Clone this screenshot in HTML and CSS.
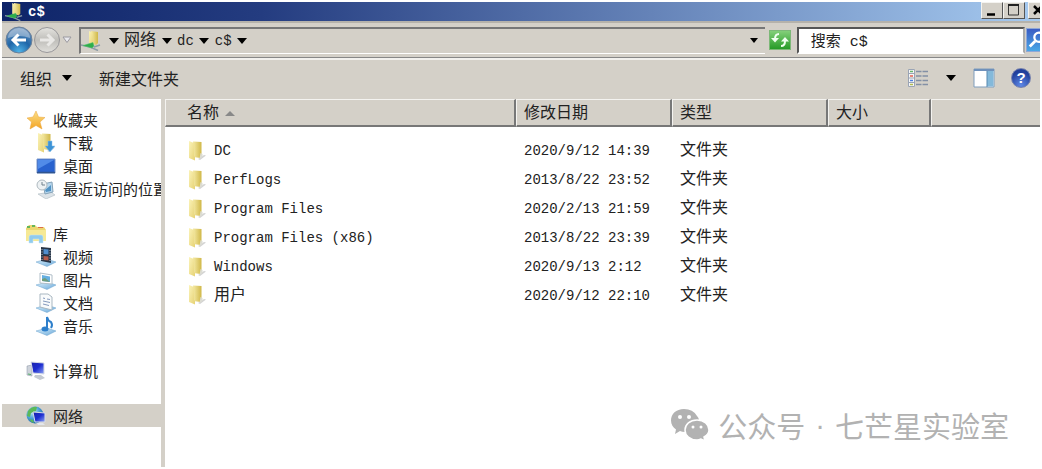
FILE: index.html
```html
<!DOCTYPE html>
<html lang="zh-CN">
<head>
    <meta charset="UTF-8">
    <meta name="viewport" content="width=device-width, initial-scale=1.0">
    <title>c$</title>
    <link rel="stylesheet" href="styles.css">
</head>
<body>
    <!-- Shared icons -->
    <svg class="sprite" aria-hidden="true">
        <defs>
            <linearGradient id="folderFront" x1="0" x2="1" y1="0" y2="1">
                <stop offset="0" stop-color="#fbf3b8"/>
                <stop offset="1" stop-color="#e6d274"/>
            </linearGradient>
            <linearGradient id="folderBack" x1="0" x2="1">
                <stop offset="0" stop-color="#f5eaa6"/>
                <stop offset="1" stop-color="#d0b848"/>
            </linearGradient>
            <linearGradient id="screen" x1="0" x2="1" y1="0" y2="1">
                <stop offset="0" stop-color="#1a22a8"/>
                <stop offset="0.5" stop-color="#1c2cd0"/>
                <stop offset="1" stop-color="#8fa6f4"/>
            </linearGradient>
            <linearGradient id="tray" x1="0" x2="1" y1="0" y2="1">
                <stop offset="0" stop-color="#d9effb"/>
                <stop offset="1" stop-color="#6ba9da"/>
            </linearGradient>
            <radialGradient id="globe" cx="0.35" cy="0.3" r="0.8">
                <stop offset="0" stop-color="#c9ecf8"/>
                <stop offset="0.5" stop-color="#4aa0d8"/>
                <stop offset="1" stop-color="#175a9c"/>
            </radialGradient>
            <radialGradient id="backFill" cx="0.5" cy="0.95" r="0.9">
                <stop offset="0" stop-color="#4fb4e8"/>
                <stop offset="0.5" stop-color="#1f66a8"/>
                <stop offset="1" stop-color="#6f94bd"/>
            </radialGradient>
            <linearGradient id="forwardFill" x1="0" x2="0" y1="0" y2="1">
                <stop offset="0" stop-color="#e4e3df"/>
                <stop offset="0.5" stop-color="#bfbeba"/>
                <stop offset="1" stop-color="#e0dfdb"/>
            </linearGradient>
            <linearGradient id="starFill" x1="0" x2="0" y1="0" y2="1">
                <stop offset="0" stop-color="#fbe08a"/>
                <stop offset="1" stop-color="#f3a423"/>
            </linearGradient>
        </defs>
        <symbol id="folder" viewBox="0 0 20 20">
            <path d="M11 18l6-4 2 .5-6 4.500z" fill="#b5b5b5" opacity="0.6"/>
            <path d="M6 .5l8.500.5v13.500l-1 2.500L6 16z" fill="url(#folderBack)"/>
            <path d="M2 0l5 2v13l1 1v3.500L2 17z" fill="url(#folderFront)"/>
            <path d="M13.500 12l2 1v3l-3 2z" fill="#dcdcd2"/>
        </symbol>
        <symbol id="share" viewBox="0 0 20 20">
            <path d="M10 0l7 1v11l-2 2-5-2z" fill="url(#folderBack)"/>
            <path d="M8 0l4 2v12l-4-2z" fill="url(#folderFront)"/>
            <path d="M0 14l9 2 8 3.500M13 16l6-2" stroke="#8b9aa5" stroke-width="1.500" fill="none"/>
            <path d="M2 14.500l10-3 1 3.500-2 2z" fill="#2fae4b" stroke="#4fc369" stroke-width="0.500"/>
        </symbol>
    </svg>

    <div class="explorer">
        <header class="title-bar">
            <svg class="title-icon"><use href="#share"/></svg>
            <h1 class="title-text">c$</h1>
            <div class="window-buttons">
                <button class="window-button" aria-label="最小化">
                    <svg viewBox="0 0 20 15"><path d="M5 11.500h8" stroke="#000" stroke-width="2.500"/></svg>
                </button>
                <button class="window-button" aria-label="最大化">
                    <svg viewBox="0 0 20 15"><path d="M4.500 2v10h10V2z" fill="none" stroke="#333"/><path d="M4 2h11" stroke="#222" stroke-width="2"/></svg>
                </button>
                <button class="window-button close" aria-label="关闭">
                    <svg viewBox="0 0 20 15"><path d="M5 3l8 8M13 3l-8 8" stroke="#000" stroke-width="2.500"/></svg>
                </button>
            </div>
        </header>

        <div class="address-row">
            <div class="history">
                <button class="round-button" aria-label="后退">
                    <svg viewBox="0 0 28 28">
                        <circle cx="14" cy="14" r="13" fill="url(#backFill)" stroke="#6b8099"/>
                        <path d="M3 12a11 10 0 0 1 22 0q-11-4-22 0z" fill="#fff" opacity="0.35"/>
                        <path d="M13.500 8.500L8 14l5.500 5.500M9 14h12" fill="none" stroke="#fff" stroke-width="3"/>
                    </svg>
                </button>
                <button class="round-button" aria-label="前进">
                    <svg viewBox="0 0 28 28">
                        <circle cx="14" cy="14" r="12.500" fill="url(#forwardFill)" stroke="#98979a"/>
                        <path d="M14.500 8.500L20 14l-5.500 5.500M19 14H7" fill="none" stroke="#e9e8e6" stroke-width="3"/>
                    </svg>
                </button>
                <button class="history-menu" aria-label="最近的页面">
                    <svg viewBox="0 0 10 8"><path d="M1 1h8L5 6.500z" fill="#e9e9ee" stroke="#9b9aa0"/></svg>
                </button>
            </div>
            <nav class="address-box" aria-label="地址">
                <svg class="address-icon"><use href="#share"/></svg>
                <button class="arrow" aria-label="展开"></button>
                <a class="crumb cn" href="#network">网络</a>
                <button class="arrow" aria-label="展开网络"></button>
                <a class="crumb" href="#dc">dc</a>
                <button class="arrow" aria-label="展开dc"></button>
                <a class="crumb" href="#c">c$</a>
                <button class="arrow" aria-label="展开c$"></button>
                <button class="arrow small last" aria-label="以前的位置"></button>
            </nav>
            <button class="refresh" aria-label="刷新">
                <svg viewBox="0 0 20 18">
                    <path d="M9 3Q5 3 5 8" fill="none" stroke="#f0fff0" stroke-width="2"/>
                    <path d="M1 7h8l-4 4.500z" fill="#f0fff0"/>
                    <path d="M11 15q4 0 4-5" fill="none" stroke="#f0fff0" stroke-width="2"/>
                    <path d="M11 10.500h8L15 6z" fill="#f0fff0"/>
                </svg>
            </button>
            <input class="search-box" type="text" value="搜索 c$" aria-label="搜索">
            <button class="search-button" aria-label="开始搜索">
                <svg viewBox="0 0 24 24"><circle cx="13" cy="9" r="5" fill="none" stroke="#fff" stroke-width="2.500"/><path d="M9 13l-6 6" stroke="#fff" stroke-width="3"/></svg>
            </button>
        </div>

        <div class="command-bar">
            <button class="command cn">组织 <span class="triangle"></span></button>
            <button class="command cn">新建文件夹</button>
            <div class="view-tools">
                <button class="tool" aria-label="更改视图">
                    <svg width="22" height="20" viewBox="0 0 22 20">
                        <path d="M1.500 1.500h6v17h-6z" fill="#f7f7f7" stroke="#9aa4b5"/>
                        <path d="M1.500 5.500h6M1.500 10h6M1.500 14.500h6" stroke="#9aa4b5"/>
                        <path d="M3 3.500h3" stroke="#68b46c" stroke-width="1.500"/>
                        <path d="M3 8h3" stroke="#e2604f" stroke-width="1.500"/>
                        <path d="M3 12.500h3" stroke="#4c7fe0" stroke-width="1.500"/>
                        <path d="M3 16.500h3" stroke="#b1bd52" stroke-width="1.500"/>
                        <path d="M9 3.500h12M9 8h12M9 12.500h12M9 16.500h12" stroke="#8390a5" stroke-width="1.500" stroke-dasharray="5.500 1"/>
                    </svg>
                </button>
                <button class="arrow" aria-label="更多选项"></button>
                <button class="tool preview" aria-label="显示预览窗格">
                    <svg width="22" height="20" viewBox="0 0 22 20">
                        <path d="M1 1h20v18H1z" fill="#fff" stroke="#7f9dbd"/>
                        <path d="M1 2h20" stroke="#6f91bb" stroke-width="2"/>
                        <path d="M14 3h6.500v15.500H14z" fill="#84b9da"/>
                        <path d="M14 3v16" stroke="#5689b0"/>
                    </svg>
                </button>
                <button class="help" aria-label="获取帮助">?</button>
            </div>
        </div>

        <div class="panes">
            <nav class="sidebar" aria-label="导航窗格">
                <ul class="tree">
                    <li><a class="place" href="#favorites">
                        <svg viewBox="0 0 20 20"><path d="M10 1l2.500 6 6.500.5-5 4.500 2 7-6-3.500L4 19l1.500-7L1 8l6-1z" fill="url(#starFill)" stroke="#eba53a" stroke-width="0.500"/></svg>
                        收藏夹</a></li>
                    <li><a class="place child" href="#downloads">
                        <svg viewBox="0 0 20 20"><use href="#folder"/><path d="M12 8h4v5h3l-5 6-5-6h3z" fill="#3d93d6" stroke="#8ac3ea" stroke-width="0.500"/></svg>
                        下载</a></li>
                    <li><a class="place child" href="#desktop">
                        <svg viewBox="0 0 20 20"><path d="M1 3h18v14H1z" fill="#2862cf" stroke="#7896cb"/><path d="M2 4h16L2 13z" fill="#5b96ed" opacity="0.8"/><path d="M1 16.500h18" stroke="#31558e" stroke-width="1.500"/></svg>
                        桌面</a></li>
                    <li><a class="place child" href="#recent">
                        <svg viewBox="0 0 20 20"><path d="M2 15l13-2 4 3-9 4z" fill="#dce3e8" stroke="#a2b0b9" stroke-width="0.500"/><path d="M7 5l9-2 1 10-8 2z" fill="#b7d7ee" stroke="#86a3b8"/><path d="M9 11l6-5v6l-5 1z" fill="#5293c4"/><circle cx="6" cy="6" r="5" fill="#edf1f3" stroke="#aeb9c0"/><path d="M6 3v3h3" fill="none" stroke="#71818c"/></svg>
                        最近访问的位置</a></li>
                </ul>
                <ul class="tree">
                    <li><a class="place" href="#libraries">
                        <svg viewBox="0 0 20 20"><path d="M0 4l3-3h6l2 2h7l2 3v11H0z" fill="#ecd670"/><path d="M1 3h3M6 2h3" stroke="#65b65b" stroke-width="2"/><path d="M12 3.500h5" stroke="#de6d47"/><path d="M0 6h20v11H0z" fill="#f6e995"/><path d="M3 19v-6q0-2 2-2h10q2 0 2 2v6h-4v-4H7v4z" fill="#91cbed" stroke="#c5e5f8" stroke-width="0.500"/></svg>
                        库</a></li>
                    <li><a class="place child" href="#videos">
                        <svg viewBox="0 0 20 20"><path d="M0 15l11-3 9 3-9 4.500z" fill="url(#tray)" stroke="#69a3ce" stroke-width="0.500"/><path d="M5 0l10 1v15L5 14z" fill="#273547"/><path d="M7.500 2l5 .5v5l-5-.5z" fill="#508dcd"/><path d="M7.500 9l5 .5v4l-5-.5z" fill="#b55b4b"/><path d="M6 2v11M14 3v11" stroke="#b6c0cc" stroke-dasharray="1 1.500"/></svg>
                        视频</a></li>
                    <li><a class="place child" href="#pictures">
                        <svg viewBox="0 0 20 20"><path d="M0 15l11-3 9 3-9 4.500z" fill="url(#tray)" stroke="#69a3ce" stroke-width="0.500"/><path d="M4 3l12 2v9L4 13z" fill="#fff" stroke="#b0bec8"/><path d="M6 5l8 1.500V12l-8-1z" fill="#64aee0"/><path d="M6 9l3-1 5 4-8-1z" fill="#6f9d7b"/></svg>
                        图片</a></li>
                    <li><a class="place child" href="#documents">
                        <svg viewBox="0 0 20 20"><path d="M0 15l11-3 9 3-9 4.500z" fill="url(#tray)" stroke="#69a3ce" stroke-width="0.500"/><path d="M4 1h8l4 3v13L4 14z" fill="#f9fbfc" stroke="#a9b7c1"/><path d="M7 5l2 .5M11 6l3 .5M7 8l7 1.500M7 11l6 1.500" stroke="#8499bd"/></svg>
                        文档</a></li>
                    <li><a class="place child" href="#music">
                        <svg viewBox="0 0 20 20"><path d="M0 15l11-3 9 3-9 4.500z" fill="url(#tray)" stroke="#69a3ce" stroke-width="0.500"/><ellipse cx="9" cy="13" rx="3.500" ry="2.500" fill="#2d7fcb"/><path d="M11 13V1q1 4 4 5 2 3 0 6" fill="none" stroke="#2d7fcb" stroke-width="2"/></svg>
                        音乐</a></li>
                </ul>
                <ul class="tree">
                    <li><a class="place" href="#computer">
                        <svg viewBox="0 0 20 20"><path d="M1 5l5-1v11l-5-1z" fill="#ced3db" stroke="#8791a1" stroke-width="0.500"/><path d="M2 13l3 .5" stroke="#4fae62"/><path d="M5 1l13 1v11L7 12z" fill="url(#screen)" stroke="#d7dce5"/><path d="M9 14l6 0 4 3-5 2-6-3z" fill="#c4cad2"/></svg>
                        计算机</a></li>
                </ul>
                <ul class="tree">
                    <li><a class="place selected" href="#network" aria-current="page">
                        <svg viewBox="0 0 20 20"><circle cx="9" cy="9" r="8.500" fill="url(#globe)"/><path d="M2 5q4-5 9-4l-1 4-5 2-1 4-3-1zM3 13l4 1 1 3q-3-1-5-4z" fill="#5bb957"/><path d="M7 6l12 1v9L9 16z" fill="url(#screen)" stroke="#d7dce5"/><path d="M11 17l6 0 2 2-7 0z" fill="#e3e6ea"/></svg>
                        网络</a></li>
                </ul>
            </nav>

            <main class="file-pane">
                <table class="files">
                    <colgroup>
                        <col class="col-name">
                        <col class="col-date">
                        <col class="col-type">
                        <col class="col-size">
                        <col>
                    </colgroup>
                    <thead>
                        <tr>
                            <th class="name" aria-sort="ascending">名称 <span class="sort"></span></th>
                            <th>修改日期</th>
                            <th>类型</th>
                            <th>大小</th>
                            <td></td>
                        </tr>
                    </thead>
                    <tbody>
                        <tr>
                            <td class="name"><svg><use href="#folder"/></svg>DC</td>
                            <td>2020/9/12 14:39</td>
                            <td class="cn">文件夹</td>
                        </tr>
                        <tr>
                            <td class="name"><svg><use href="#folder"/></svg>PerfLogs</td>
                            <td>2013/8/22 23:52</td>
                            <td class="cn">文件夹</td>
                        </tr>
                        <tr>
                            <td class="name"><svg><use href="#folder"/></svg>Program Files</td>
                            <td>2020/2/13 21:59</td>
                            <td class="cn">文件夹</td>
                        </tr>
                        <tr>
                            <td class="name"><svg><use href="#folder"/></svg>Program Files (x86)</td>
                            <td>2013/8/22 23:39</td>
                            <td class="cn">文件夹</td>
                        </tr>
                        <tr>
                            <td class="name"><svg><use href="#folder"/></svg>Windows</td>
                            <td>2020/9/13 2:12</td>
                            <td class="cn">文件夹</td>
                        </tr>
                        <tr>
                            <td class="name cn"><svg><use href="#folder"/></svg>用户</td>
                            <td>2020/9/12 22:10</td>
                            <td class="cn">文件夹</td>
                        </tr>
                    </tbody>
                </table>
            </main>
        </div>

        <div class="watermark">
            <svg viewBox="0 0 40 34">
                <path d="M14 1C6 1 1 6 1 12.500c0 4 2 7 5 9L5 26l5-3q2 1 5 1 9 0 12.500-6T27 8Q23 1 14 1z" fill="#b2b2b2"/>
                <path d="M27 12c-7 0-12 4.500-12 10s5 10 12 10q2 0 4-1l4 2-1-4q5-3 5-7c0-5.500-5-10-12-10z" fill="#b2b2b2" stroke="#fff" stroke-width="1.500"/>
                <g fill="#fff">
                    <circle cx="10" cy="9" r="2"/>
                    <circle cx="19" cy="9" r="2"/>
                    <circle cx="23" cy="19" r="1.500"/>
                    <circle cx="31" cy="19" r="1.500"/>
                </g>
            </svg>
            <span>公众号</span>
            <span class="dot">·</span>
            <span>七芒星实验室</span>
        </div>
    </div>
</body>
</html>
```
FILE: styles.css
```css
* {
    box-sizing: border-box;
}
body {
    margin: 0;
    padding: 2px;
    background-color: #fff;
    color: #222;
    font-family: "Liberation Mono", "Noto Sans CJK SC", monospace;
    font-size: 14px;
}
button {
    flex-shrink: 0;
    margin: 0;
    padding: 0;
    border: none;
    background: none;
    color: inherit;
    font: inherit;
}
a {
    color: inherit;
    text-decoration: none;
}
svg {
    display: block;
    flex-shrink: 0;
}
.sprite {
    position: absolute;
    width: 0;
    height: 0;
}
.cn {
    font-size: 16px;
}
.explorer {
    position: relative;
    display: flex;
    flex-direction: column;
    min-height: calc(100vh - 4px);
    overflow: hidden;
}

/* Title bar */
.title-bar {
    display: flex;
    align-items: center;
    height: 19px;
    padding-left: 2px;
    background: linear-gradient(to right, #0e2468, #243c80 25%, #a6caf0);
}
.title-icon {
    width: 20px;
    height: 18px;
}
.title-text {
    flex: 1;
    margin: 0 0 0 4px;
    color: #fff;
    font-size: 14px;
}
.window-buttons {
    display: flex;
    align-self: flex-start;
    margin-right: -10px;
}
.window-button {
    width: 22px;
    height: 17px;
    background-color: #d4d0c8;
    border: 1px solid #f4f3f0;
    border-right-color: #555;
    border-bottom-color: #555;
}
.window-button svg {
    width: 20px;
    height: 15px;
}
.close {
    margin-left: 3px;
}

/* Address bar */
.address-row {
    display: flex;
    align-items: center;
    height: 37px;
    background-color: #d4d0c8;
    border-top: 2px solid #b5b2ab;
    border-bottom: 1px solid #888;
}
.history {
    display: flex;
    align-items: center;
    padding-left: 3px;
}
.round-button {
    width: 28px;
    height: 28px;
}
.history-menu {
    width: 10px;
    margin: 0 7px 0 1px;
}
.address-box {
    display: flex;
    align-items: center;
    flex: 1;
    height: 27px;
    border: 1px solid #fff;
    border-top: 2px solid #777;
    border-left: 2px solid #777;
    border-right: none;
}
.address-box .cn {
    line-height: 24px;
}
.address-icon {
    width: 20px;
    height: 20px;
    margin-right: 2px;
}
.arrow {
    display: flex;
    justify-content: center;
    width: 21px;
}
.arrow::before,
.triangle {
    content: "";
    border: 5px solid transparent;
    border-top: 6px solid #000;
    border-bottom: none;
}
.arrow.small::before {
    border-width: 4px;
    border-top-width: 5px;
    border-bottom: none;
}
.last {
    margin-left: auto;
}
.refresh {
    width: 22px;
    height: 20px;
    margin: 0 6px 0 4px;
    background: linear-gradient(#83cf79, #269b27);
    border: 1px solid #7cb877;
}
.refresh svg {
    width: 20px;
    height: 18px;
}
.search-box {
    width: 22%;
    height: 27px;
    padding: 0 12px;
    border: 2px solid #fff;
    border-top-color: #555;
    border-left-color: #555;
    border-right-color: #aaa;
    background-color: #fff;
    color: #222;
    font: inherit;
    font-size: 15px;
}
.search-button {
    width: 24px;
    height: 24px;
    margin: 0 -10px 0 1px;
    background: linear-gradient(#3a5cc4, #49a7e6);
    border: 1px solid #8fa7d6;
}

/* Command bar */
.command-bar {
    display: flex;
    align-items: center;
    gap: 27px;
    height: 41px;
    padding: 0 9px 4px 18px;
    background-color: #d4d0c8;
    border-top: 2px solid #f2f1ee;
}
.command {
    display: flex;
    align-items: center;
    gap: 10px;
}
.view-tools {
    display: flex;
    align-items: center;
    margin-left: auto;
}
.view-tools .arrow {
    width: 44px;
}
.preview {
    margin-right: 16px;
}
.help {
    width: 20px;
    height: 20px;
    border: 1px solid #7480ad;
    border-radius: 50%;
    background: radial-gradient(circle at 50% 90%, #5e88e6, #22409c 70%);
    color: #fff;
    font: bold 15px/18px "Liberation Sans", sans-serif;
}

/* Navigation pane */
.panes {
    display: flex;
    flex: 1;
    background-color: #fff;
}
.sidebar {
    flex-shrink: 0;
    width: 163px;
    padding-top: 9px;
    border-right: 4px solid #d4d0c8;
    overflow: hidden;
}
.tree {
    margin: 0 0 22px;
    padding: 0;
    list-style: none;
}
.place {
    display: flex;
    align-items: center;
    gap: 7px;
    height: 23px;
    padding-left: 24px;
    font-size: 15px;
    line-height: normal;
    white-space: nowrap;
}
.place svg {
    width: 20px;
    height: 20px;
}
.child {
    padding-left: 34px;
}
.selected {
    background-color: #d4d0c8;
}

/* File list */
.file-pane {
    flex: 1;
    min-width: 0;
}
.files {
    width: 100%;
    border-collapse: separate;
    border-spacing: 0;
    table-layout: fixed;
    text-align: left;
}
.col-name {
    width: 351px;
}
.col-date,
.col-type {
    width: 156px;
}
.col-size {
    width: 103px;
}
.files thead th,
.files thead td {
    height: 28px;
    padding: 3px 0 0 7px;
    background-color: #d4d0c8;
    border-top: 1px solid #f4f3f0;
    border-left: 1px solid #f4f3f0;
    border-bottom: 2px solid #777;
    font-size: 16px;
    font-weight: normal;
    line-height: 22px;
}
.files thead th {
    border-right: 2px solid #777;
}
.files thead .name {
    padding-left: 21px;
}
.sort {
    display: inline-block;
    margin-left: -4px;
    border: 5px solid transparent;
    border-top: none;
    border-bottom: 5px solid #888;
    vertical-align: middle;
}
.files tbody::before {
    content: "";
    display: block;
    height: 9px;
}
.files tbody td {
    height: 29px;
    padding: 0 0 0 8px;
    line-height: 24px;
    white-space: nowrap;
}
.files tbody .name {
    padding-left: 22px;
}
.name svg {
    display: inline-block;
    width: 20px;
    height: 20px;
    margin-right: 7px;
    vertical-align: middle;
}

.watermark {
    position: absolute;
    right: 31px;
    bottom: 20px;
    display: flex;
    align-items: center;
    gap: 8px;
    color: #b2b2b2;
    font-family: "Noto Sans CJK SC", sans-serif;
    font-size: 29px;
    line-height: 44px;
}
.watermark svg {
    width: 40px;
    height: 34px;
}
.dot {
    padding: 0 2px;
    font-family: "Liberation Sans", sans-serif;
}
```
